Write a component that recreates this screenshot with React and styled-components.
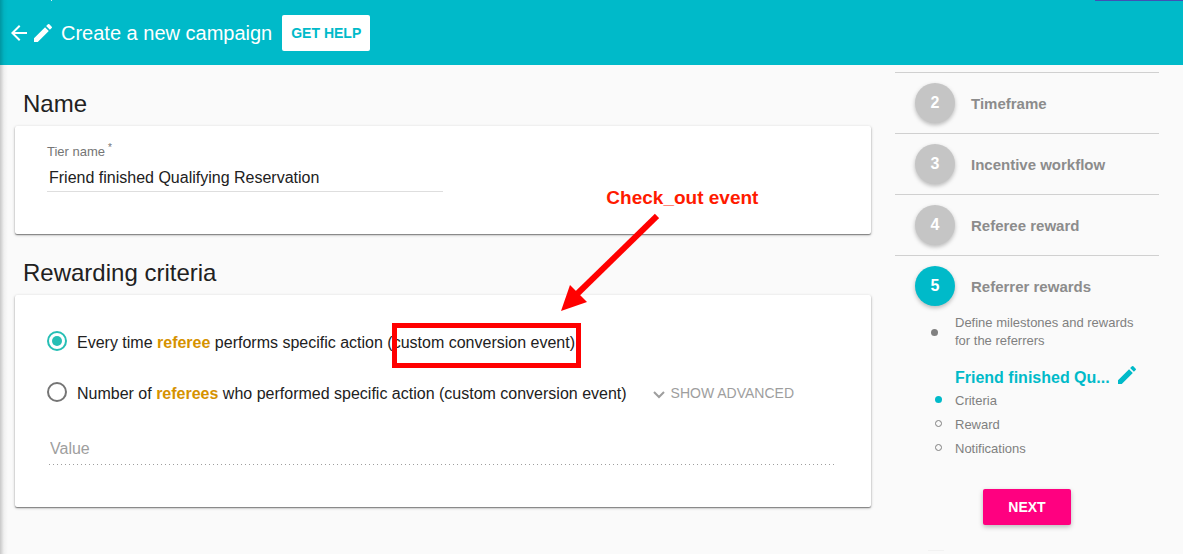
import React, { useState } from "react";
import styled, { createGlobalStyle } from "styled-components";
import { MdArrowBack, MdEdit } from "react-icons/md";

const teal = "#00bac9";

const GlobalStyle = createGlobalStyle`
    * {
        box-sizing: border-box;
    }

    body {
        background: #fafafa;
        color: #212121;
        font-family: "Liberation Sans", Arial, sans-serif;
        margin: 0;
    }

    button, input {
        font-family: inherit;
    }
`;

const Page = styled.div`
    min-height: 100vh;
    overflow: hidden;
    position: relative;

    &::before {
        background: linear-gradient(to right, rgba(0, 0, 0, 0.2), rgba(0, 0, 0, 0.04) 4px, transparent);
        bottom: 0;
        content: "";
        left: 0;
        pointer-events: none;
        position: absolute;
        top: 0;
        width: 8px;
        z-index: 1;
    }
`;

const Toolbar = styled.header`
    align-items: center;
    background: ${teal};
    color: white;
    display: flex;
    height: 65px;
    padding: 0 7px;
    position: relative;

    &::after {
        background: rgba(255, 255, 255, 0.8);
        content: "";
        height: 1px;
        left: 51px;
        position: absolute;
        top: 0;
        width: 1px;
    }
`;

const ToolbarStrip = styled.div`
    background: #3f51b5;
    height: 1px;
    position: absolute;
    right: 0;
    top: 0;
    width: 88px;
`;

const BackButton = styled.button`
    background: none;
    border: 0;
    color: inherit;
    display: flex;
    font-size: 24px;
    padding: 0;
`;

const ToolbarTitle = styled.h1`
    font-size: 20px;
    font-weight: 400;
    line-height: 24px;
    margin: 0 10px 0 6px;
`;

const Button = styled.button`
    background: ${({ $primary }) => ($primary ? "#ff0080" : "white")};
    border: 0;
    border-radius: 2px;
    box-shadow: ${({ $primary }) => ($primary ? "0 2px 5px rgba(0, 0, 0, 0.26)" : "none")};
    color: ${({ $primary }) => ($primary ? "white" : teal)};
    font-size: 14px;
    font-weight: 700;
    height: 36px;
    min-width: 88px;
    padding: 0 8px;
`;

const Content = styled.div`
    display: grid;
    gap: 24px;
    grid-template-columns: minmax(0, 1fr) 264px;
    padding: 0 24px 0 15px;
`;

const Form = styled.main`
    padding-top: 25px;
`;

const Section = styled.section`
    margin-bottom: 25px;
`;

const SectionTitle = styled.h2`
    font-size: 24px;
    font-weight: 400;
    line-height: 28px;
    margin: 0 8px 8px;
`;

const Card = styled.div`
    background: white;
    border-radius: 2px;
    box-shadow: 0 1px 3px rgba(0, 0, 0, 0.3), 0 1px 1px rgba(0, 0, 0, 0.35);
    padding: ${({ $top }) => $top} 32px 42px;
`;

const FieldLabel = styled.label`
    color: #757575;
    display: block;
    font-size: 13px;
    line-height: 16px;

    sup {
        font-size: 10px;
        line-height: 0;
        margin-left: 3px;
    }
`;

const TextInput = styled.input`
    background: none;
    border: 0;
    border-bottom: 1px solid #dedede;
    color: inherit;
    display: block;
    font-size: 16px;
    height: 28px;
    margin-top: 4px;
    outline: 0;
    padding: 0 2px;
    width: 50%;
`;

const ValueInput = styled.input`
    background: linear-gradient(to right, #9e9e9e 25%, transparent 0) 0 100% / 4px 1px repeat-x;
    border: 0;
    display: block;
    font-size: 16px;
    height: 32px;
    margin: 0 5px 0 2px;
    padding: 0 1px;
    width: calc(100% - 7px);

    &::placeholder {
        color: #9e9e9e;
        opacity: 1;
    }
`;

const OptionRow = styled.div`
    align-items: center;
    display: flex;
    margin-bottom: 27px;
`;

const OptionLabel = styled.label`
    align-items: center;
    display: flex;
    font-size: 16px;
    gap: 10px;
    line-height: 24px;
`;

const Radio = styled.input`
    appearance: none;
    border: 2px solid #757575;
    border-radius: 50%;
    display: grid;
    flex: none;
    height: 20px;
    margin: 0 0 4px;
    place-items: center;
    width: 20px;

    &:checked {
        border-color: #26bfb5;
    }

    &:checked::before {
        background: #26bfb5;
        border-radius: 50%;
        content: "";
        height: 10px;
        width: 10px;
    }
`;

const Highlight = styled.strong`
    color: #d69200;
`;

const AdvancedButton = styled.button`
    align-items: center;
    background: none;
    border: 0;
    color: #9e9e9e;
    display: flex;
    font-size: 14px;
    gap: 6px;
    margin-left: 26px;
    padding: 0 0 3px;

    svg {
        height: 8px;
        margin-top: 4px;
        width: 12px;
    }
`;

const Marked = styled.span`
    position: relative;
`;

const MarkBox = styled.span`
    border: 5px solid #ff0000;
    height: 45px;
    left: 5px;
    position: absolute;
    top: -11px;
    width: 189px;
`;

const MarkArrow = styled.svg`
    height: 100px;
    left: 172px;
    position: absolute;
    top: -121px;
    width: 100px;
`;

const MarkText = styled.span`
    color: #ff1a00;
    font-size: 19px;
    font-weight: 700;
    left: 219px;
    position: absolute;
    top: -148px;
    white-space: nowrap;
`;

const Sidebar = styled.aside`
    padding-top: 7px;
`;

const Steps = styled.ol`
    list-style: none;
    margin: 0;
    padding: 0;
`;

const Step = styled.li`
    align-items: center;
    border-top: 1px solid #d0d0d0;
    color: #8c8c8c;
    display: flex;
    font-size: 15px;
    font-weight: 700;
    gap: 16px;
    padding: 10px 20px;
`;

const StepNumber = styled.span`
    align-items: center;
    background: ${({ $active }) => ($active ? teal : "#c5c5c5")};
    border-radius: 50%;
    box-shadow: 0 2px 4px rgba(0, 0, 0, 0.26);
    color: white;
    display: flex;
    flex: none;
    font-size: 16px;
    height: 40px;
    justify-content: center;
    width: 40px;
`;

const Details = styled.div`
    color: #808080;
    font-size: 13px;
    padding: 0 20px 0 36px;
`;

const Description = styled.div`
    align-items: center;
    display: flex;
    gap: 17px;
    line-height: 18px;
    margin-bottom: 16px;
    margin-top: -2px;
`;

const Bullet = styled.span`
    background: ${({ $color }) => $color || "transparent"};
    border: ${({ $color }) => ($color ? "0" : "1px solid #808080")};
    border-radius: 50%;
    flex: none;
    height: 7px;
    width: 7px;
`;

const Milestone = styled.div`
    align-items: center;
    color: ${teal};
    display: flex;
    font-size: 16px;
    font-weight: 700;
    height: 24px;
    justify-content: space-between;
    padding-left: 24px;
    white-space: nowrap;

    svg {
        flex: none;
        font-size: 24px;
        margin-bottom: 6px;
    }
`;

const SubSteps = styled.ul`
    line-height: 24px;
    list-style: none;
    margin: -1px 0 28px;
    padding: 0 0 0 4px;
`;

const SubStep = styled.li`
    align-items: center;
    display: flex;
    gap: 13px;

    ${Bullet} {
        margin-bottom: 3px;
    }
`;

const NextRow = styled.div`
    display: flex;
    justify-content: center;
`;

// Top edge of the step that continues below the fold
const NextStepEdge = styled.div`
    background: #f2f2f2;
    height: 1px;
    margin: 25px 0 0 33px;
    width: 16px;
`;

const steps = [
    { number: 2, title: "Timeframe" },
    { number: 3, title: "Incentive workflow" },
    { number: 4, title: "Referee reward" },
    { number: 5, title: "Referrer rewards", active: true },
];

function shorten(text, length) {
    return text.length > length ? text.slice(0, length) + "..." : text;
}

function Annotation() {
    return (
        <>
            <MarkBox />
            <MarkArrow viewBox="0 0 100 100" aria-hidden="true">
                <path d="M98 3 L17 82" stroke="#ff0000" strokeWidth="6" />
                <path d="M2 98 L11 72 L28 89 Z" fill="#ff0000" />
            </MarkArrow>
            <MarkText>Check_out event</MarkText>
        </>
    );
}

export default function App() {
    const [tierName, setTierName] = useState("Friend finished Qualifying Reservation");
    const [criteria, setCriteria] = useState("every");

    return (
        <Page>
            <GlobalStyle />
            <Toolbar>
                <ToolbarStrip />
                <BackButton aria-label="Back"><MdArrowBack /></BackButton>
                <MdEdit size={24} />
                <ToolbarTitle>Create a new campaign</ToolbarTitle>
                <Button>GET HELP</Button>
            </Toolbar>
            <Content>
                <Form>
                    <Section>
                        <SectionTitle>Name</SectionTitle>
                        <Card $top="18px">
                            <FieldLabel htmlFor="tier">Tier name<sup>*</sup></FieldLabel>
                            <TextInput id="tier" value={tierName} onChange={(e) => setTierName(e.target.value)} />
                        </Card>
                    </Section>
                    <Section>
                        <SectionTitle>Rewarding criteria</SectionTitle>
                        <Card $top="36px">
                            <OptionRow>
                                <OptionLabel>
                                    <Radio type="radio" name="criteria" checked={criteria === "every"} onChange={() => setCriteria("every")} />
                                    <span>
                                        Every time <Highlight>referee</Highlight> performs specific action{" "}
                                        <Marked>(custom conversion event)<Annotation /></Marked>
                                    </span>
                                </OptionLabel>
                            </OptionRow>
                            <OptionRow>
                                <OptionLabel>
                                    <Radio type="radio" name="criteria" checked={criteria === "number"} onChange={() => setCriteria("number")} />
                                    <span>
                                        Number of <Highlight>referees</Highlight> who performed specific action (custom conversion event)
                                    </span>
                                </OptionLabel>
                                <AdvancedButton>
                                    <svg viewBox="0 0 12 8" fill="none" stroke="currentColor" strokeWidth="2" aria-hidden="true">
                                        <path d="M1 1 L6 6 L11 1" />
                                    </svg>
                                    SHOW ADVANCED
                                </AdvancedButton>
                            </OptionRow>
                            <ValueInput placeholder="Value" aria-label="Value" disabled />
                        </Card>
                    </Section>
                </Form>
                <Sidebar>
                    <Steps>
                        {steps.map(({ number, title, active }) => (
                            <Step key={number}>
                                <StepNumber $active={active}>{number}</StepNumber>
                                {title}
                            </Step>
                        ))}
                    </Steps>
                    <Details>
                        <Description>
                            <Bullet $color="#808080" />
                            <span>Define milestones and rewards for the referrers</span>
                        </Description>
                        <Milestone>
                            {shorten(tierName, 18)}
                            <MdEdit />
                        </Milestone>
                        <SubSteps>
                            <SubStep><Bullet $color={teal} />Criteria</SubStep>
                            <SubStep><Bullet />Reward</SubStep>
                            <SubStep><Bullet />Notifications</SubStep>
                        </SubSteps>
                    </Details>
                    <NextRow>
                        <Button $primary>NEXT</Button>
                    </NextRow>
                    <NextStepEdge />
                </Sidebar>
            </Content>
        </Page>
    );
}
